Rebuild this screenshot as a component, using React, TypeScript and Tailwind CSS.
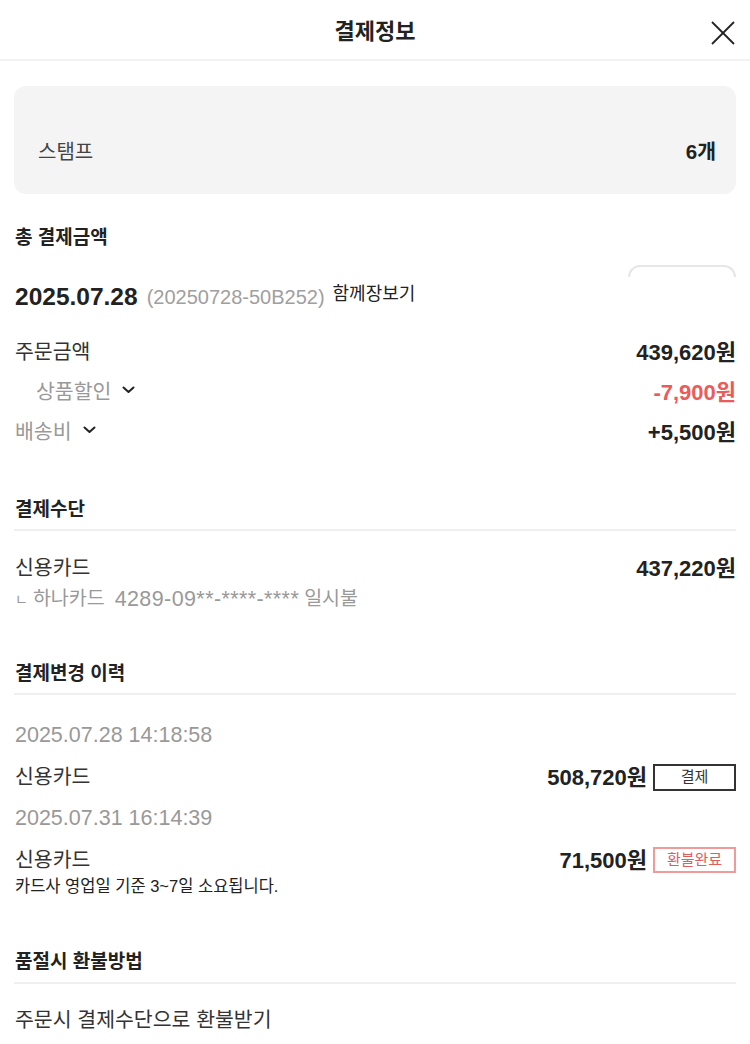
import React from "react";

const Chevron = () => (
  <svg width="13" height="8" viewBox="0 0 13 8" className="ml-[11px] mt-[-5px]">
    <polyline points="1.5,1.5 6.5,6 11.5,1.5" fill="none" stroke="#222" strokeWidth="2" strokeLinecap="round" strokeLinejoin="round" />
  </svg>
);

const Divider = () => <div className="h-[2px] bg-[#efefef]" />;

export default function App() {
  return (
    <div
      className="w-[750px] h-[1044px] overflow-hidden bg-white text-[#222]"
      style={{ fontFamily: '"Liberation Sans", "Noto Sans CJK KR", sans-serif' }}
    >
      {/* header */}
      <div className="relative h-[61px] flex items-center justify-center border-b-2 border-[#f2f2f4]">
        <div className="mt-[4px] text-[22px] font-bold leading-none">결제정보</div>
        <svg width="26" height="26" viewBox="0 0 26 26" className="absolute right-[14px] top-[20px]">
          <line x1="2" y1="2" x2="24" y2="24" stroke="#222" strokeWidth="1.8" />
          <line x1="24" y1="2" x2="2" y2="24" stroke="#222" strokeWidth="1.8" />
        </svg>
      </div>

      <div className="px-[14px]">
        {/* stamp box */}
        <div className="mt-[25px] h-[108px] rounded-[12px] bg-[#f4f4f4] pl-[24px] pr-[20px] pt-[52px] flex justify-between">
          <span className="text-[20px] leading-[28px] text-[#444]">스탬프</span>
          <span className="text-[20.5px] leading-[28px] font-bold text-[#222]">6개</span>
        </div>

        {/* 총 결제금액 */}
        <div className="mt-[32px] pl-[1px] text-[19px] font-bold leading-[24px]">총 결제금액</div>
        <div className="mt-[15px] h-[12px] flex justify-end">
          <div className="w-[108px] h-[12px] rounded-t-[12px] border-t-2 border-x-2 border-[#e6e6e6]" />
        </div>
        <div className="mt-[6px] h-[28px] flex items-center pl-[1px]">
          <span className="text-[24.5px] font-bold">2025.07.28</span>
          <span className="ml-[9px] text-[20px] text-[#a0a0a0]">(20250728-50B252)</span>
          <span className="ml-[8px] text-[18px] text-[#222] mt-[-6px]">함께장보기</span>
        </div>

        <div className="mt-[21px] h-[40px] flex items-center justify-between pl-[1px]">
          <span className="text-[20.5px] text-[#333]">주문금액</span>
          <span className="text-[22px] font-bold">439,620원</span>
        </div>
        <div className="h-[40px] flex items-center justify-between pl-[22px]">
          <span className="flex items-center text-[20.5px] text-[#999]">
            상품할인
            <Chevron />
          </span>
          <span className="text-[22px] font-bold text-[#ec5a5a]">-7,900원</span>
        </div>
        <div className="h-[40px] flex items-center justify-between pl-[1px]">
          <span className="flex items-center text-[20.5px] text-[#999]">
            배송비
            <Chevron />
          </span>
          <span className="text-[22px] font-bold">+5,500원</span>
        </div>

        {/* 결제수단 */}
        <div className="mt-[46px] pl-[1px] text-[19px] font-bold leading-[24px]">결제수단</div>
        <div className="mt-[7px]">
          <Divider />
        </div>
        <div className="mt-[23px] h-[28px] flex items-center justify-between pl-[1px]">
          <span className="text-[20.5px] text-[#333]">신용카드</span>
          <span className="text-[22px] font-bold">437,220원</span>
        </div>
        <div className="mt-[3px] h-[28px] flex items-center pl-[1px] text-[19.5px] text-[#999]">
          <span className="text-[14px] mr-[5px]">ㄴ</span>
          <span>하나카드</span>
          <span className="ml-[10px] text-[21.5px] tracking-[0.4px]">4289-09**-****-****</span>
          <span className="ml-[5px]">일시불</span>
        </div>

        {/* 결제변경 이력 */}
        <div className="mt-[49px] pl-[1px] text-[19px] font-bold leading-[24px]">결제변경 이력</div>
        <div className="mt-[7px]">
          <Divider />
        </div>
        <div className="mt-[26px] h-[28px] flex items-center pl-[1px] text-[21.5px] text-[#999]">2025.07.28 14:18:58</div>
        <div className="mt-[14px] h-[28px] flex items-center justify-between pl-[1px]">
          <span className="text-[20.5px] text-[#333]">신용카드</span>
          <span className="flex items-center">
            <span className="text-[22px] font-bold">508,720원</span>
            <span className="ml-[6px] w-[83px] h-[27px] flex items-center justify-center border-2 border-[#333] text-[15px] text-[#333]">
              결제
            </span>
          </span>
        </div>
        <div className="mt-[13px] h-[28px] flex items-center pl-[1px] text-[21.5px] text-[#999]">2025.07.31 16:14:39</div>
        <div className="mt-[14px] h-[28px] flex items-center justify-between pl-[1px]">
          <span className="text-[20.5px] text-[#333]">신용카드</span>
          <span className="flex items-center">
            <span className="text-[22px] font-bold">71,500원</span>
            <span className="ml-[6px] w-[83px] h-[26px] flex items-center justify-center border-2 border-[#f19a9a] text-[15px] text-[#e25c5c]">
              환불완료
            </span>
          </span>
        </div>
        <div className="mt-[1px] h-[22px] flex items-center pl-[1px] text-[16.5px] text-[#222]">카드사 영업일 기준 3~7일 소요됩니다.</div>

        {/* 품절시 환불방법 */}
        <div className="mt-[53px] pl-[1px] text-[19px] font-bold leading-[24px]">품절시 환불방법</div>
        <div className="mt-[8px]">
          <Divider />
        </div>
        <div className="mt-[22px] h-[28px] flex items-center pl-[1px] text-[20.5px] text-[#333]">주문시 결제수단으로 환불받기</div>
      </div>
    </div>
  );
}
